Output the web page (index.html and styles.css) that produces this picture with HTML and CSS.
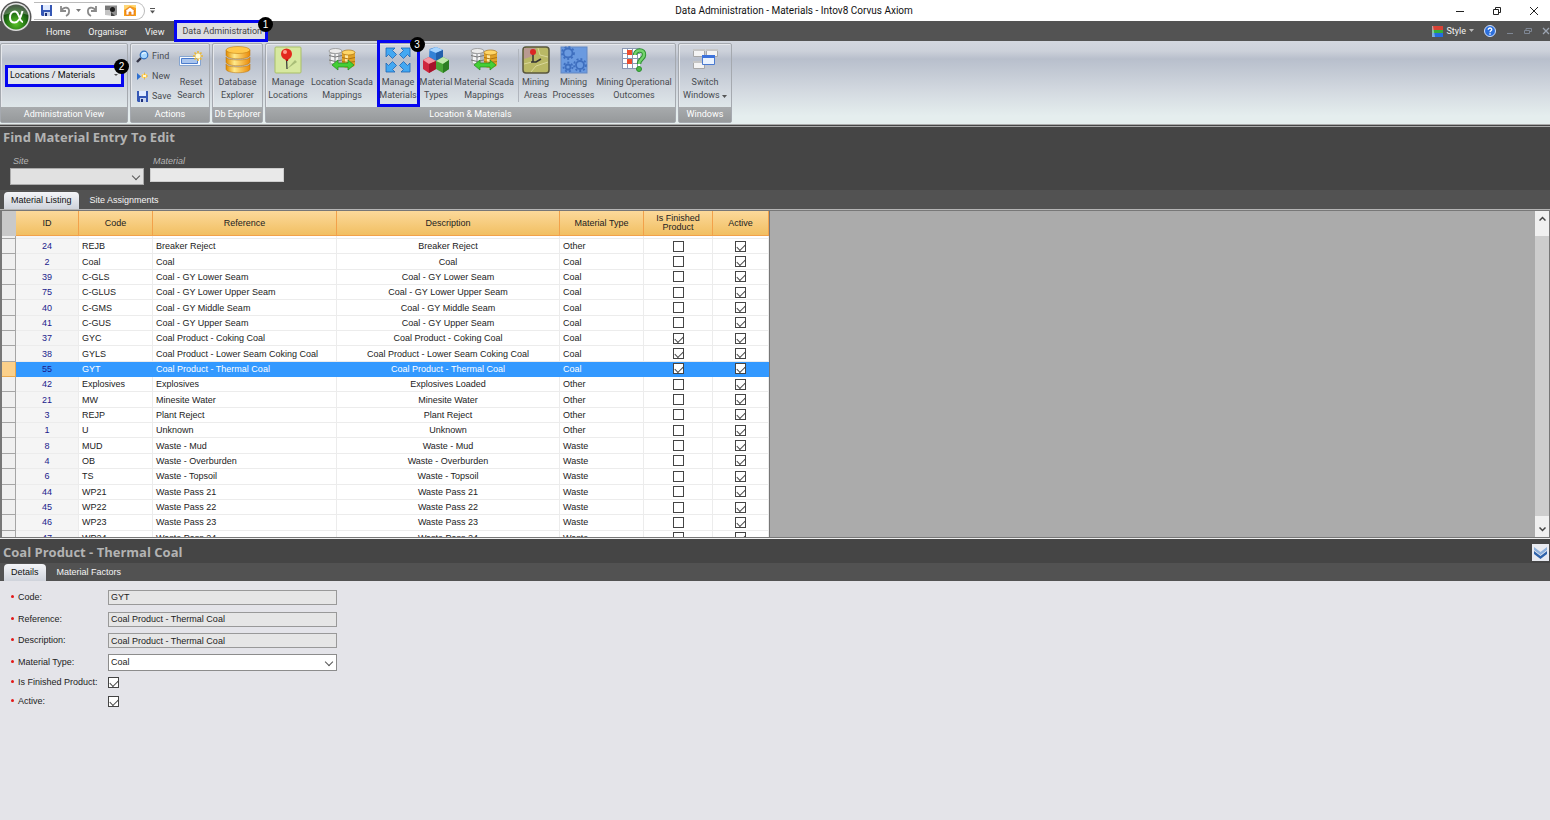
FILE: index.html
```
<!DOCTYPE html>
<html lang="en">
<head>
<meta charset="utf-8">
<title>Data Administration - Materials - Intov8 Corvus Axiom</title>
<link rel="stylesheet" href="styles.css">
</head>
<body>
<div class="app">
<header class="titlebar">
  <button class="orb" aria-label="Application menu"><svg width="34" height="34" viewBox="0 0 34 34">
    <defs><radialGradient id="orb" cx=".5" cy=".75" r=".7"><stop offset="0" stop-color="#5cc52a"/><stop offset=".6" stop-color="#1f6d13"/><stop offset="1" stop-color="#0b260a"/></radialGradient></defs>
    <circle cx="17" cy="17" r="15.5" fill="#555"/><circle cx="17" cy="17" r="14" fill="#ddd"/><circle cx="17" cy="17" r="12.5" fill="url(#orb)"/>
    <path d="M5 15a12 12 0 0 1 24 0q-12-5-24 0z" fill="#fff" opacity=".25"/>
    <path d="M23.500 11c-2 8-4.500 11.500-8 11.500-3 0-4.500-2-4.500-5 0-3.500 2-6 5-6 4.500 0 4 10.500 8 10.500" fill="none" stroke="#fff" stroke-width="2"/></svg></button>
  <div class="quick">
    <button aria-label="Save"><svg width="13" height="13" viewBox="0 0 13 13"><path d="M1 1h11v11H2L1 11z" fill="#3557b5"/><path d="M3 1h7v5H3z" fill="#dfeaff"/><path d="M4 8h6v4H4z" fill="#c8d4ee"/><path d="M5 9h2v3H5z" fill="#1d2f78"/></svg></button>
    <button aria-label="Undo"><svg width="13" height="12" viewBox="0 0 13 12"><path d="M3 1v5h5M3 6c3-5 9-4 8 1 0 2-1 3-3 4" fill="none" stroke="#8a8a8a" stroke-width="1.800"/></svg></button>
    <button aria-label="Undo history"><svg width="5" height="4"><path d="M0 0h5L2.500 3z" fill="#777"/></svg></button>
    <button aria-label="Redo"><svg width="13" height="12" viewBox="0 0 13 12"><path d="M10 1v5H5M10 6C7 1 1 2 2 7c0 2 1 3 3 4" fill="none" stroke="#8a8a8a" stroke-width="1.800"/></svg></button>
    <button aria-label="Snapshot"><svg width="14" height="13" viewBox="0 0 14 13"><path d="M1 1h12v10l-4 1-8-1z" fill="#c4c4c4"/><path d="M1 2h5v4H1z" fill="#777"/><path d="M6 2h7v9l-4 1-3-6z" fill="#8e8e8e"/><circle cx="8.500" cy="5.500" r="2.500" fill="#1d1d1d"/><path d="M7 8l4 4H7z" fill="#444"/></svg></button>
    <button aria-label="Home"><svg width="14" height="13" viewBox="0 0 14 13"><path d="M1 1h12v11H1z" fill="#f7a21b"/><path d="M1 1h12v3L7 2 1 6z" fill="#ffd777"/><path d="M2 7l5-4 5 4h-1v4H8V8H6v3H3V7z" fill="#fff" stroke="#e36c13" stroke-width=".7"/></svg></button>
  </div>
  <button class="more" aria-label="Customise toolbar"><svg width="5" height="6"><path d="M0 .5h5" stroke="#555"/><path d="M0 2.500h5L2.500 5.500z" fill="#555"/></svg></button>
  <h1>Data Administration - Materials - Intov8 Corvus Axiom</h1>
  <div class="winbtns">
    <button aria-label="Minimise"><svg width="10" height="10"><path d="M1 5.500h8" stroke="#222"/></svg></button>
    <button aria-label="Restore"><svg width="10" height="10" fill="none" stroke="#222"><path d="M1.500 3.500h5v5h-5zM3.500 3V1.500h5v5H7"/></svg></button>
    <button aria-label="Close"><svg width="10" height="10"><path d="M1 1l8 8M9 1L1 9" stroke="#222"/></svg></button>
  </div>
</header>

<nav class="tabs-main">
  <a href="#home">Home</a><a href="#organiser">Organiser</a><a href="#view" class="last">View</a>
  <a href="#admin" class="current marked">Data Administration<span class="badge">1</span></a>
  <div class="style-tools">
    <button class="style-btn"><svg width="11" height="11"><path d="M0 0h11v4H0z" fill="#d94235"/><path d="M0 4h11v3H0z" fill="#35ae3c"/><path d="M0 7h11v4H0z" fill="#246ce0"/><path d="M0 0h1L3 11H0z" fill="#b9d8dc" opacity=".6"/></svg>Style<svg width="5" height="4"><path d="M0 0h5L2.500 3z" fill="#bbb"/></svg></button>
    <button aria-label="Help"><svg width="12" height="12"><circle cx="6" cy="6" r="5.500" fill="#2c6fdc" stroke="#cfe0ff"/><path d="M4.200 4.700C4.200 2.400 8 2.500 7.800 4.600 7.700 5.800 6 5.800 6 7.300M6 8.300v1.400" fill="none" stroke="#fff" stroke-width="1.300"/></svg></button>
    <button aria-label="Minimise document"><svg width="8" height="8"><path d="M1 6.500h6" stroke="#7f8794"/></svg></button>
    <button aria-label="Restore document"><svg width="8" height="8"><path d="M.5 3.500h5v3h-5zM2 3V1.500h5.500v3H6" fill="none" stroke="#7f8794"/></svg></button>
    <button aria-label="Close document"><svg width="8" height="8"><path d="M1 1l6 6M7 1L1 7" stroke="#9da5b2" stroke-width="1.300"/></svg></button>
  </div>
</nav>

<section class="ribbon">
  <div class="group g-view"><div class="group-body">
    <div class="view-pick marked"><select aria-label="Administration view"><option>Locations / Materials</option></select><span class="badge">2</span></div>
  </div><h2>Administration View</h2></div>

  <div class="group g-actions"><div class="group-body">
    <div class="small-btns">
      <button><svg width="13" height="13" viewBox="0 0 13 13"><path d="M1 12l4-4" stroke="#334" stroke-width="2.400"/><circle cx="8" cy="5" r="3.800" fill="#a8d8ff" stroke="#2d6fc0" stroke-width="1.200"/><path d="M6 4q2-2 4-1" stroke="#fff" fill="none"/></svg>Find</button>
      <button><svg width="13" height="13" viewBox="0 0 13 13"><path d="M1 3l4 3.500L1 10z" fill="#2d6fd0"/><path d="M6 4h5v4H6z" fill="#ffd56a"/><path d="M8.500 2.500v7M5 6h7" stroke="#e9a822" stroke-width=".7"/><path d="M7 5h3v2H7z" fill="#fff8cf"/></svg>New</button>
      <button><svg width="13" height="13" viewBox="0 0 13 13"><path d="M1 1h11v11H2L1 11z" fill="#3557b5"/><path d="M3 1h7v5H3z" fill="#dfeaff"/><path d="M4 8h6v4H4z" fill="#c8d4ee"/><path d="M5 9h2v3H5z" fill="#1d2f78"/></svg>Save</button>
    </div>
    <button class="big"><svg width="26" height="28" viewBox="0 0 26 28"><path d="M1.500 10.500h21v9h-21z" fill="#f8fbff" stroke="#86a5d0"/><path d="M3.500 12.500h16v5h-16z" fill="#a9c5ee" stroke="#4c7ccc"/><path d="M20 5v10M15 10h10M16.500 6.500l7 7M23.500 6.500l-7 7" stroke="#eab837" stroke-width="1.600"/><circle cx="20" cy="10" r="2.500" fill="#fffbd8"/></svg><span>Reset<br>Search</span></button>
  </div><h2>Actions</h2></div>

  <div class="group g-db"><div class="group-body">
    <button class="big"><svg width="28" height="28" viewBox="0 0 28 28"><defs><linearGradient id="gold"><stop offset="0" stop-color="#e08a00"/><stop offset=".35" stop-color="#ffe98a"/><stop offset="1" stop-color="#ea8a08"/></linearGradient></defs>
      <g fill="url(#gold)" stroke="#b87308" stroke-width=".5"><path d="M2 18v5c0 5 24 5 24 0v-5c0 4-24 4-24 0z"/><path d="M2 11v5c0 5 24 5 24 0v-5c0 4-24 4-24 0z"/><path d="M2 4v5c0 5 24 5 24 0V4z"/><ellipse cx="14" cy="4" rx="12" ry="3.500" fill="#ffc84b"/></g></svg><span>Database<br>Explorer</span></button>
  </div><h2>Db Explorer</h2></div>

  <div class="group g-loc"><div class="group-body">
    <button class="big"><svg width="28" height="28" viewBox="0 0 28 28"><rect x="1" y="1" width="26" height="26" rx="1" fill="#d7e8a0" stroke="#a9bf68"/><path d="M13 23L23 16l-2-2z" fill="#a9bd78"/><path d="M12.500 12L13 23" stroke="#333" stroke-width="1.200"/><path d="M10 10h5l-1 5h-2z" fill="#a80f0b"/><circle cx="12.500" cy="8" r="5.500" fill="#e3291d"/><circle cx="11" cy="6" r="2" fill="#ff9d8d"/></svg><span>Manage<br>Locations</span></button>
    <button class="big"><svg width="28" height="28" viewBox="0 0 28 28"><use href="#scada"/></svg><span>Location Scada<br>Mappings</span></button>
    <button class="big manage marked"><svg width="28" height="28" viewBox="0 0 28 28" fill="#43a8f2" stroke="#1d65b4" stroke-width=".8"><path id="arr" d="M2 2h9L8.500 4.500l4 4-4 4-4-4L2 11z"/><use href="#arr" transform="matrix(-1 0 0 1 28 0)"/><use href="#arr" transform="matrix(1 0 0 -1 0 28)"/><use href="#arr" transform="rotate(180 14 14)"/></svg><span>Manage<br>Materials</span><span class="badge">3</span></button>
    <button class="big"><svg width="28" height="28" viewBox="0 0 28 28"><path d="M7.500 3L14 1l7 3v8l-7 4-7-4z" fill="#3482d6"/><path d="M7 4l7 3 7-3-7-3z" fill="#a7d5ff"/><path d="M14 7v9l7-4V4z" fill="#2360ac"/><path d="M1 14l6-3 7 4v8l-7 4-6-4z" fill="#cf273d"/><path d="M1 14l6-3 7 4-7 3z" fill="#f59aa4"/><path d="M7 18v9l7-4v-8z" fill="#a5142b"/><path d="M14 15l7-4 6 3v9l-6 4-7-4z" fill="#4aa637"/><path d="M14 15l7-4 6 3-6 4z" fill="#c0e8ac"/><path d="M21 18v9l6-4v-9z" fill="#2c7d22"/></svg><span>Material<br>Types</span></button>
    <button class="big"><svg width="28" height="28" viewBox="0 0 28 28"><g id="scada"><path d="M1 4v13c0 3 12 4 13 1V4z" fill="#b7babd"/><path d="M3 8h3v9H3zM8 8h2v10H8z" fill="#f4f4f4"/><ellipse cx="7.500" cy="5" rx="6.500" ry="2.500" fill="#ececec" stroke="#888" stroke-width=".7"/><path d="M1 9.500q6 3 13 0M1 14q6 3 13 0" stroke="#777" fill="none"/><path d="M14 6v14c2 3 12 2 13-1V6z" fill="#e0a126"/><path d="M17 9h3v10h-3z" fill="#ffe7a0"/><ellipse cx="20.500" cy="6.500" rx="6.500" ry="2.500" fill="#ffd667" stroke="#aa7416" stroke-width=".7"/><path d="M14 11.500q6 3 13 0M14 15.500q6 2 13 0" stroke="#ad7211" fill="none"/><path d="M4 19l6-5v3h10v-3l6 5-6 5v-3H10v3z" fill="#43cf35" stroke="#23881c" stroke-width=".7"/></g></svg><span>Material Scada<br>Mappings</span></button>
    <span class="sep"></span>
    <button class="big"><svg width="28" height="28" viewBox="0 0 28 28"><rect x="1" y="1" width="26" height="26" rx="3" fill="#b9b865" stroke="#59573d" stroke-width="1.500"/><path d="M2 2h12l-3 8-9 3z" fill="#b99a91"/><path d="M9 26l5-6 12-4M16 2l2 7 8 2M2 18l8-2" stroke="#d9d79a" fill="none"/><path d="M9 16h5l5-3M11 8v8" stroke="#333" stroke-width="1.500" fill="none"/><circle cx="11" cy="6" r="3" fill="#db2624"/></svg><span>Mining<br>Areas</span></button>
    <button class="big"><svg width="28" height="28" viewBox="0 0 28 28"><rect x="1" y="1" width="26" height="26" fill="#6a9ae0" stroke="#6288c4"/><g fill="none" stroke="#3f6fbf" stroke-width="1.800"><circle cx="8" cy="7" r="4.500"/><circle cx="20" cy="19" r="4"/><circle cx="8" cy="21" r="2.500"/></g><g fill="none" stroke="#3f6fbf" stroke-width="1.800" stroke-dasharray="2 2"><circle cx="8" cy="7" r="6"/><circle cx="20" cy="19" r="6"/><circle cx="8" cy="21" r="4.500"/></g></svg><span>Mining<br>Processes</span></button>
    <button class="big"><svg width="28" height="28" viewBox="0 0 28 28"><path d="M2 2h18v21H2z" fill="#fff"/><path d="M2.500 2v21M7.500 2v21M12.500 2v21M17.500 2v21M2 2.500h18M2 7.500h18M2 12.500h18M2 17.500h18M2 22.500h18" stroke="#8b98b3"/><path d="M7 4h5v5H7zM7 13h5v5H7z" fill="#ef4d2e"/><path d="M15 9c0-6 10-6 9 0 0 4-5 4-5 9" fill="none" stroke="#2d8f31" stroke-width="4.500"/><path d="M15 9c0-6 10-6 9 0 0 4-5 4-5 9" fill="none" stroke="#73d36c" stroke-width="2.500"/><circle cx="19" cy="23" r="2.500" fill="#4bb946" stroke="#2d8f31"/></svg><span>Mining Operational<br>Outcomes</span></button>
  </div><h2>Location &amp; Materials</h2></div>

  <div class="group g-win"><div class="group-body">
    <button class="big"><svg width="28" height="28" viewBox="0 0 28 28"><g fill="#f4f4f4" stroke="#a7a7a7"><path d="M2.500 3.500h11v7h-11zM15.500 3.500h11v7h-11zM2.500 15.500h11v7h-11z"/></g><path d="M2 3h12v2H2zM15 3h12v2H15zM2 15h10v2H2z" fill="#c6c6c6"/><path d="M11.500 9.500h12v9h-12z" fill="#eaf3ff" stroke="#4a7ad0"/><path d="M11 9h13v3H11z" fill="#3c72dc"/></svg><span>Switch<br>Windows <svg class="inline-arrow" width="5" height="3"><path d="M0 0h5L2.500 3z" fill="#555"/></svg></span></button>
  </div><h2>Windows</h2></div>
</section>

<main class="work">
  <section class="find">
    <h2 class="panel-title">Find Material Entry To Edit</h2>
    <div class="filters">
      <div class="filter"><label for="site">Site</label><span class="combo"><select id="site"><option></option></select></span></div>
      <div class="filter"><label for="mat">Material</label><input id="mat" type="text"></div>
    </div>
  </section>
  <nav class="subtabs"><a href="#listing" class="on">Material Listing</a><a href="#sites">Site Assignments</a></nav>
  <section class="listing">
    <div class="grid-clip">
      <table>
        <colgroup><col class="c-head"><col class="c-id"><col class="c-code"><col class="c-ref"><col class="c-desc"><col class="c-type"><col class="c-fin"><col class="c-act"></colgroup>
        <thead><tr><td></td><th>ID</th><th>Code</th><th>Reference</th><th>Description</th><th>Material Type</th><th>Is Finished<br>Product</th><th>Active</th></tr></thead>
        <tbody id="rows"></tbody>
      </table>
    </div>
    <div class="scroll">
      <button aria-label="Scroll up"><svg width="7" height="5"><path d="M.5 4.500l3-3 3 3" fill="none" stroke="#444" stroke-width="1.500"/></svg></button>
      <span class="thumb"></span>
      <button aria-label="Scroll down"><svg width="7" height="5"><path d="M.5 .5l3 3 3-3" fill="none" stroke="#444" stroke-width="1.500"/></svg></button>
    </div>
  </section>
  <section class="detail-head">
    <h2 class="panel-title">Coal Product - Thermal Coal</h2>
    <button class="collapse" aria-label="Collapse"><svg width="15" height="15" viewBox="0 0 15 15"><path d="M1 2l6.500 5L14 2v3L7.500 10 1 5z" fill="#8db0dc"/><path d="M1 6l6.500 5L14 6v3l-6.500 5L1 9z" fill="#2f63ab"/></svg></button>
  </section>
  <nav class="subtabs lower"><a href="#details" class="on">Details</a><a href="#factors">Material Factors</a></nav>
  <form class="details">
    <label for="f-code">Code:</label><input id="f-code" type="text" value="GYT" readonly>
    <label for="f-ref">Reference:</label><input id="f-ref" type="text" value="Coal Product - Thermal Coal" readonly>
    <label for="f-desc">Description:</label><input id="f-desc" type="text" value="Coal Product - Thermal Coal" readonly>
    <label for="f-type">Material Type:</label><span class="combo white"><select id="f-type"><option>Coal</option></select></span>
    <label for="f-fin">Is Finished Product:</label><input id="f-fin" type="checkbox" checked>
    <label for="f-act">Active:</label><input id="f-act" type="checkbox" checked>
  </form>
</main>
</div>
<script src="app.js"></script>
</body>
</html>
```
FILE: styles.css
```
* { box-sizing: border-box; }
body { margin: 0; font: 9px/13px "Liberation Sans", Arial, sans-serif; color: #222; background: #e4e4e9; }
button { border: 0; padding: 0; background: none; font: inherit; color: inherit; }
input, select { font: inherit; color: inherit; margin: 0; border-radius: 0; }
select { appearance: none; }
a { color: inherit; text-decoration: none; }
h1, h2 { margin: 0; font-weight: normal; }
svg { display: block; flex: none; }
.app { display: flex; flex-direction: column; min-height: 100vh; }

.titlebar { position: relative; display: flex; align-items: center; height: 21px; background: #fff; padding-left: 34px; }
.orb { position: absolute; left: -1px; top: 0; z-index: 3; }
.quick { display: flex; align-items: center; gap: 5px; height: 18px; padding: 0 7px 0 6px; border: 1px solid #bbb; border-left: 0; border-radius: 0 9px 9px 0; }
.more { margin-left: 5px; }
.titlebar h1 { position: absolute; left: 0; right: 38px; text-align: center; font: 10px/20px Roboto, sans-serif; color: #111; pointer-events: none; padding-left: 76px; }
.winbtns { display: flex; gap: 27px; margin-left: auto; padding-right: 11px; }

.tabs-main { display: flex; align-items: center; height: 20px; background: #535353; color: #f2f2f2; padding-left: 46px; font-family: Roboto, sans-serif; }
.tabs-main > a { position: relative; margin-right: 18px; line-height: 20px; padding-top: 2px; }
.tabs-main > .last { margin-right: 10px; }
.tabs-main > .current { display: flex; align-items: center; height: 22px; padding: 0 3px 0 5px; margin: 0; background: #dcdde1; color: #444; }
.marked { border: 3px solid #0505f0; z-index: 2; }
.badge { position: absolute; top: -6px; right: -8px; width: 15px; height: 15px; border-radius: 50%; background: #000; color: #fff; font: 10px/15px "Liberation Sans", sans-serif; text-align: center; }
.style-tools { display: flex; align-items: center; gap: 10px; margin-left: auto; }
.style-btn { display: flex; align-items: center; gap: 3px; }

.ribbon { display: flex; gap: 2px; height: 83px; padding: 2px 0 1px; background: linear-gradient(#d3d7df 0, #ccd1da 10px, #b8bfcc 18px, #d3d9e0 50px, #e5eeee 75px); color: #484b50; font-family: Roboto, sans-serif; }
.group { display: flex; flex-direction: column; height: 80px; border: 1px solid #a5a9af; border-radius: 2px; box-shadow: inset 1px 1px #e6e8ec; }
.group-body { flex: 1; display: flex; }
.group h2 { height: 15px; font-size: 9px; line-height: 15px; text-align: center; color: #fff; background: linear-gradient(#a8abad, #96999b); white-space: nowrap; }
.g-view { width: 128px; }
.g-actions { width: 80px; }
.g-db { width: 51px; }
.g-loc { width: 411px; }
.g-win { width: 54px; }
.g-db .big, .g-win .big { flex: 1; }
.view-pick { position: relative; align-self: center; width: 119px; height: 22px; margin-left: 4px; background: #e2e5ea; }
.view-pick select { width: 100%; height: 16px; padding: 0 2px; border: 0; background: none; color: #111; }
.view-pick::after { content: ""; position: absolute; right: 3px; top: 6px; border: 2px solid transparent; border-top-color: #555; pointer-events: none; }
.view-pick .badge { top: -9px; }
.small-btns { display: flex; flex-direction: column; justify-content: space-around; padding: 2px 0 1px 5px; width: 42px; }
.small-btns button { display: flex; align-items: center; gap: 3px; }
.big { position: relative; display: flex; flex-direction: column; align-items: center; justify-content: flex-start; gap: 2px; min-width: 0; padding-top: 2px; white-space: nowrap; text-align: center; }
.inline-arrow { display: inline-block; }
.g-actions .big { width: 36px; }
.g-loc .group-body { display: grid; grid-template-columns: 44px 64px 48px 28px 68px 1px 33px 43px 78px; }
.manage.marked { width: 43px; height: 67px; justify-self: center; margin: -4px 0 -3px; padding-top: 3px; }
.sep { background: #b0b5bd; margin: 5px 0; }

.work { flex: 1; display: flex; flex-direction: column; border-top: 3px double #aaa; background: #454545; }
.panel-title { font: bold 13px/21px "Open Sans", "Noto Sans", sans-serif; color: #b3b3b3; padding-left: 3px; }
.find { height: 63px; }
.filters { display: flex; gap: 6px; padding: 7px 10px 0; }
.filter { display: flex; flex-direction: column; width: 134px; }
.filter label { font-style: italic; color: #b5b5b5; padding-left: 3px; line-height: 13px; }
.filter input { height: 14px; border: 1px solid #ccc; background: #e9e9e9; }
.combo { position: relative; display: block; }
.combo select { display: block; width: 100%; height: 17px; border: 1px solid #aaa; background: #e1e1e1; padding: 0 2px; }
.combo::after { content: ""; position: absolute; right: 5px; top: 5px; width: 5px; height: 5px; border: solid #555; border-width: 0 1px 1px 0; transform: rotate(45deg); pointer-events: none; }
.combo.white select { background: #fff; border-color: #8c8c8c; }

.subtabs { display: flex; align-items: flex-end; height: 20px; padding-left: 4px; background: #525252; color: #f5f5f5; border-bottom: 1px solid #b5b5b5; }
.subtabs a { height: 17px; line-height: 17px; padding: 0 6px; border-radius: 4px 4px 0 0; }
.subtabs a + a { margin-left: 5px; }
.subtabs .on { background: linear-gradient(#f4f5f8, #cfd3db); color: #111; padding: 0 7px; }

.listing { display: flex; height: 328px; background: #ababab; border: solid #777; border-width: 1px 1px 1px 2px; }
.grid-clip { flex: 1; overflow: hidden; }
table { border-collapse: separate; border-spacing: 0; table-layout: fixed; width: 768px; height: 335px; background: #fff; border-right: 1px solid #777; }
.c-head { width: 14px; } .c-id { width: 63px; } .c-code { width: 74px; } .c-ref { width: 184px; }
.c-desc { width: 223px; } .c-type { width: 84px; } .c-fin { width: 69px; } .c-act { width: 56px; }
thead tr { height: 25px; }
thead td { background: #c9c9c9; padding: 0; }
th { padding: 0; font-weight: normal; line-height: 9px; color: #222; background: linear-gradient(#fcd99a, #f1bf62); border-right: 1px solid #f2a14a; border-bottom: 1px solid #f2a14a; }
tbody td { padding: 0 3px; line-height: 12px; border-right: 1px solid #ececec; border-bottom: 1px solid #ececec; white-space: nowrap; }
tbody td:first-child { background: #f0f0f0; border-color: #a5a5a5; }
tbody td:nth-child(2) { color: #1b1b8c; background: #f5f5f5; text-align: center; }
tbody td:nth-child(5), tbody td:nth-child(n+7) { text-align: center; }
.spacer { height: 3px; }
.spacer td { line-height: 0; }
.selected td, .selected td:nth-child(2) { background: #3399ff; color: #fff; border-color: #3399ff; }
.selected td:first-child { background: #fbd08a; border-color: #e9a94e; }
.selected td:nth-child(2) { color: #1b1b8c; }
input[type=checkbox] { appearance: none; position: relative; display: block; width: 11px; height: 11px; background: #fff; border: 1px solid #444; }
td input[type=checkbox] { margin: 0 auto; }
input[type=checkbox]:checked::before { content: ""; position: absolute; left: 1px; top: 2px; width: 7px; height: 4px; border: solid #444; border-width: 0 0 1px 1px; transform: rotate(-45deg); }
.scroll { display: flex; flex-direction: column; width: 14px; background: #f0f0f0; }
.scroll button { display: flex; align-items: center; justify-content: center; height: 15px; margin-top: 6px; }
.scroll button:first-child { margin: 0 0 10px; }
.thumb { flex: 1; background: #cdcdcd; }

.detail-head { display: flex; justify-content: space-between; align-items: center; height: 25px; padding-top: 3px; border-top: 1px solid #eee; }
.collapse { background: #e8eaf0; padding: 1px; margin-right: 1px; }
.lower { height: 18px; border: 0; }
.details { flex: 1; display: grid; grid-template-columns: 97px 229px; grid-template-rows: 22px 22px 21px 22px 19px 19px; align-items: center; align-content: start; background: #e4e4e9; padding: 5px 11px; }
.details label::before { content: ""; display: inline-block; width: 3px; height: 3px; margin-right: 4px; border-radius: 50%; background: #e31818; vertical-align: 2px; }
.details input[type=text] { width: 100%; height: 15px; padding: 0 2px; border: 1px solid #999; background: #e6e6e6; }
```
FILE: app.js
```
const materials = [
  [24, "REJB", "Breaker Reject", "", "Other"],
  [2, "Coal", "Coal", "", "Coal"],
  [39, "C-GLS", "Coal - GY Lower Seam", "", "Coal"],
  [75, "C-GLUS", "Coal - GY Lower Upper Seam", "", "Coal"],
  [40, "C-GMS", "Coal - GY Middle Seam", "", "Coal"],
  [41, "C-GUS", "Coal - GY Upper Seam", "", "Coal"],
  [37, "GYC", "Coal Product - Coking Coal", "", "Coal", true],
  [38, "GYLS", "Coal Product - Lower Seam Coking Coal", "", "Coal", true],
  [55, "GYT", "Coal Product - Thermal Coal", "", "Coal", true],
  [42, "Explosives", "Explosives", "Explosives Loaded", "Other"],
  [21, "MW", "Minesite Water", "", "Other"],
  [3, "REJP", "Plant Reject", "", "Other"],
  [1, "U", "Unknown", "", "Other"],
  [8, "MUD", "Waste - Mud", "", "Waste"],
  [4, "OB", "Waste - Overburden", "", "Waste"],
  [6, "TS", "Waste - Topsoil", "", "Waste"],
  [44, "WP21", "Waste Pass 21", "", "Waste"],
  [45, "WP22", "Waste Pass 22", "", "Waste"],
  [46, "WP23", "Waste Pass 23", "", "Waste"],
  [47, "WP24", "Waste Pass 24", "", "Waste"]
];
const box = (on, name) => `<input type="checkbox" aria-label="${name}"${on ? " checked" : ""}>`;
document.getElementById("rows").innerHTML =
  `<tr class="spacer">${"<td></td>".repeat(8)}</tr>` +
  materials.map(([id, code, ref, desc, type, finished]) =>
    `<tr${id === 55 ? ' class="selected"' : ""}><td></td><td>${id}</td><td>${code}</td><td>${ref}</td><td>${desc || ref}</td><td>${type}</td><td>${box(finished, "Is Finished Product")}</td><td>${box(true, "Active")}</td></tr>`).join("");
```
